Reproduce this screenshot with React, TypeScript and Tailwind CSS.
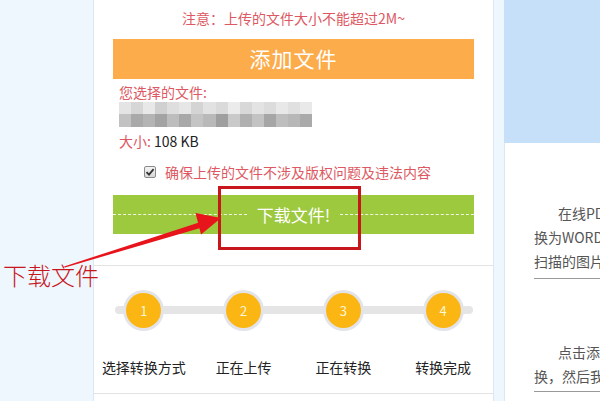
import React from "react"

const blurTop = ["#e4e4e4", "#d6d6d6", "#e8e8e8", "#d0d0d0", "#dedede", "#e6e6e6", "#d4d4d4", "#e2e2e2", "#dadada", "#ebebeb", "#d8d8d8", "#e3e3e3", "#dcdcdc", "#e8e8e8", "#e0e0e0", "#e9e9e9"]
const blurBottom = ["#c2c2c2", "#a9a9a9", "#b4b4b4", "#a3a3a3", "#bdbdbd", "#a8a8a8", "#c4c4c4", "#b9b9b9", "#9f9f9f", "#c9c9c9", "#b0b0b0", "#c3c3c3", "#a6a6a6", "#bebebe", "#b7b7b7", "#aaaaaa"]

const steps = [
  { n: "1", label: "选择转换方式" },
  { n: "2", label: "正在上传" },
  { n: "3", label: "正在转换" },
  { n: "4", label: "转换完成" },
]

export default function App() {
  return (
    <div className="relative flex w-[600px] h-[401px] overflow-hidden bg-[#eef7fe] font-['Noto_Sans_CJK_SC','Noto_Sans',sans-serif]">
      {/* left gutter */}
      <div className="w-[94px] shrink-0 border-r border-[#d9e8f3]" />

      {/* main upload panel */}
      <div className="w-[400px] shrink-0 bg-white border-r border-[#d9e8f3] flex flex-col">
        <div className="px-[19px] pb-[31px] border-b border-[#e3e3e3]">
          <p className="pt-[8px] h-[28px] text-center text-[14px] leading-[20px] text-[#dd5862]">
            注意：上传的文件大小不能超过2M~
          </p>
          <div className="mt-[11px] h-[40px] bg-[#fdac4b] flex items-center justify-center text-white text-[21px] tracking-[1px]">
            添加文件
          </div>
          <p className="mt-[4px] px-[6px] text-[14px] leading-[18px] text-[#dd5862]">您选择的文件:</p>
          <div className="mt-[1px] ml-[6px] w-[193px] h-[25px] flex flex-col">
            <div className="flex h-[12px]">
              {blurTop.map((c, i) => (
                <div key={i} className="flex-1" style={{ backgroundColor: c }} />
              ))}
            </div>
            <div className="flex h-[13px]">
              {blurBottom.map((c, i) => (
                <div key={i} className="flex-1" style={{ backgroundColor: c }} />
              ))}
            </div>
          </div>
          <p className="mt-[5px] px-[6px] text-[14px] leading-[18px] text-[#222]">
            <span className="text-[#dd5862]">大小:</span> 108 KB
          </p>
          <div className="mt-[12px] h-[20px] flex items-center justify-center gap-[9px] pr-[12px]">
            <span className="w-[12px] h-[12px] rounded-[2px] border border-[#8a8a8a] bg-gradient-to-b from-[#f4f4f4] to-[#d8d8d8] flex items-center justify-center">
              <svg width="10" height="10" viewBox="0 0 10 10">
                <path d="M1.5 5.2 L4 7.6 L8.6 2.2" fill="none" stroke="#333" strokeWidth="1.8" />
              </svg>
            </span>
            <span className="text-[14px] leading-[20px] text-[#dd5862]">确保上传的文件不涉及版权问题及违法内容</span>
          </div>
          <div className="relative mt-[13px] h-[39px] bg-[#9dc93f] flex items-center">
            <div className="flex-1 border-t border-dashed border-[#f1f7e3]" />
            <span className="px-[10px] text-white text-[17px] leading-none">下载文件!</span>
            <div className="flex-1 border-t border-dashed border-[#f1f7e3]" />
            <div className="absolute left-[105px] top-[-9px] w-[143px] h-[64px] border-[3px] border-[#c8161d]" />
          </div>
        </div>

        {/* steps */}
        <div className="relative pt-[24px] border-b border-[#e3e3e3] h-[128px]">
          <div className="absolute left-[21px] right-[20px] top-[40px] h-[8px] rounded-full bg-[#e5e5e5]" />
          <div className="relative grid grid-cols-4">
            {steps.map((s) => (
              <div key={s.n} className="flex flex-col items-center">
                <div className="w-[41px] h-[41px] rounded-full bg-[#e2e4ea] flex items-center justify-center">
                  <div className="w-[35px] h-[35px] rounded-full bg-[#fbb614] flex items-center justify-center text-[#fff6d6] text-[13px]">
                    {s.n}
                  </div>
                </div>
                <span className="mt-[27px] text-[14px] leading-[18px] text-[#222]">{s.label}</span>
              </div>
            ))}
          </div>
        </div>
      </div>

      {/* gap */}
      <div className="w-[10px] shrink-0" />

      {/* right column */}
      <div className="w-[260px] shrink-0 flex flex-col">
        <div className="h-[143px] bg-[#c5e0f8]" />
        <div className="flex-1 bg-white border-l border-[#d9e8f3] pl-[29px] text-[14px] text-[#555] leading-[24px]">
          <div className="pt-[58px] pb-[5px] border-b border-[#999] w-[220px]">
            <p className="whitespace-nowrap pl-[24px]">在线PDF转WORD工具，可以将PDF转</p>
            <p className="whitespace-nowrap">换为WORD文档，同时支持识别</p>
            <p className="whitespace-nowrap">扫描的图片中的文字内容。</p>
          </div>
          <div className="pt-[61px] pb-[3px] border-b border-[#999] w-[220px]">
            <p className="whitespace-nowrap pl-[24px]">点击添加文件，选择需要转</p>
            <p className="whitespace-nowrap">换，然后我们将为您转换。</p>
          </div>
        </div>
      </div>

      {/* annotation */}
      <span className="absolute left-[3px] top-[260px] text-[24px] leading-[30px] font-light text-[#c8161d]">下载文件</span>
      <svg className="absolute left-0 top-0 pointer-events-none" width="600" height="401" viewBox="0 0 600 401">
        <polygon points="64,266.5 200.5,222 202,227.5 65,267.5" fill="#e8141b" />
        <polygon points="221,218 201,234.5 195.5,213" fill="#e8141b" />
      </svg>
    </div>
  )
}
